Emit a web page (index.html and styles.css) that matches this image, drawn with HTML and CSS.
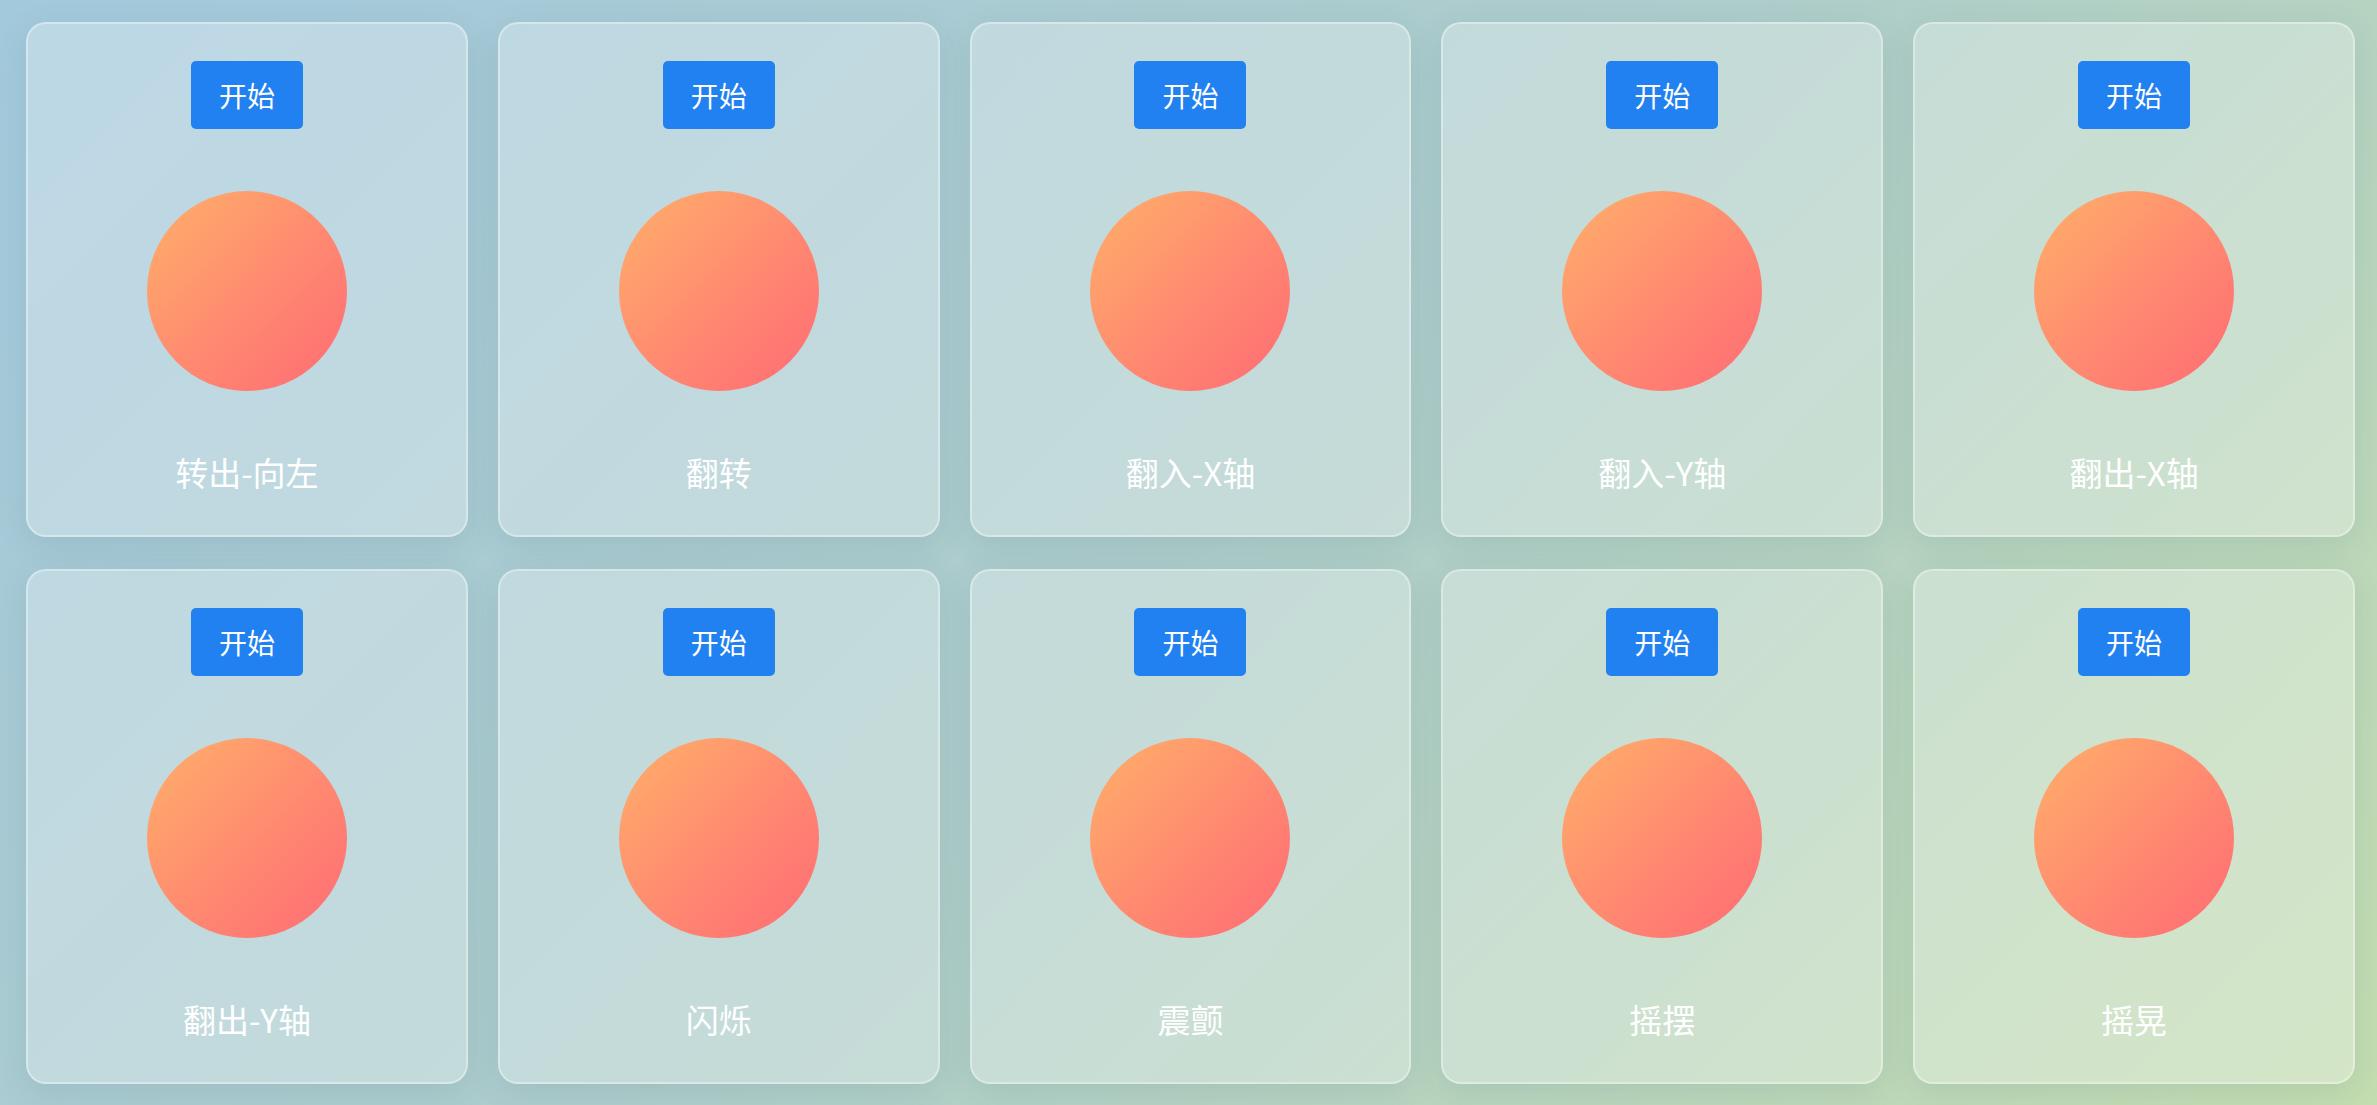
FILE: index.html
```html
<!DOCTYPE html>
<html lang="zh-CN">
<head>
    <meta charset="UTF-8">
    <meta name="viewport" content="width=device-width, initial-scale=1.0">
    <title>动画演示</title>
    <link rel="stylesheet" href="styles.css">
</head>
<body>
    <div class="grid">
        <div class="card">
            <button class="button">开始</button>
            <div class="ball"></div>
            <p class="label">转出-向左</p>
        </div>
        <div class="card">
            <button class="button">开始</button>
            <div class="ball"></div>
            <p class="label">翻转</p>
        </div>
        <div class="card">
            <button class="button">开始</button>
            <div class="ball"></div>
            <p class="label">翻入-X轴</p>
        </div>
        <div class="card">
            <button class="button">开始</button>
            <div class="ball"></div>
            <p class="label">翻入-Y轴</p>
        </div>
        <div class="card">
            <button class="button">开始</button>
            <div class="ball"></div>
            <p class="label">翻出-X轴</p>
        </div>
        <div class="card">
            <button class="button">开始</button>
            <div class="ball"></div>
            <p class="label">翻出-Y轴</p>
        </div>
        <div class="card">
            <button class="button">开始</button>
            <div class="ball"></div>
            <p class="label">闪烁</p>
        </div>
        <div class="card">
            <button class="button">开始</button>
            <div class="ball"></div>
            <p class="label">震颤</p>
        </div>
        <div class="card">
            <button class="button">开始</button>
            <div class="ball"></div>
            <p class="label">摇摆</p>
        </div>
        <div class="card">
            <button class="button">开始</button>
            <div class="ball"></div>
            <p class="label">摇晃</p>
        </div>
    </div>
</body>
</html>
```

FILE: styles.css
```css
html, body {
    height: 100%;
}

body {
    margin: 0;
    background: linear-gradient(135deg, #a3c9dd 0%, #aecdcb 50%, #c4ddb0 100%);
    font-family: 'Noto Sans CJK SC', 'Noto Sans', sans-serif;
    color: white;
    overflow: hidden;
}

.grid {
    display: grid;
    grid-template-columns: repeat(5, 1fr);
    gap: 32px 30px;
    padding: 22px 22px 22px 26px;
}

.card {
    display: flex;
    flex-direction: column;
    align-items: center;
    height: 515px;
    box-sizing: border-box;
    padding-top: 37px;
    background-color: rgba(255, 255, 255, 0.28);
    border: 2px solid rgba(255, 255, 255, 0.35);
    border-radius: 20px;
    box-shadow: 0 8px 32px rgba(40, 90, 110, 0.12);
}

.button {
    background-color: #2281f1;
    border: none;
    color: white;
    width: 112px;
    height: 68px;
    padding: 0;
    font-family: inherit;
    font-size: 28px;
    border-radius: 5px;
    cursor: pointer;
}

.ball {
    width: 200px;
    height: 200px;
    margin-top: 62px;
    border-radius: 50%;
    background: linear-gradient(135deg, #ffb069 0%, #ff8c70 50%, #ff6b74 100%);
}

.label {
    margin: 57px 0 0;
    font-size: 33px;
    line-height: 48px;
}
```
